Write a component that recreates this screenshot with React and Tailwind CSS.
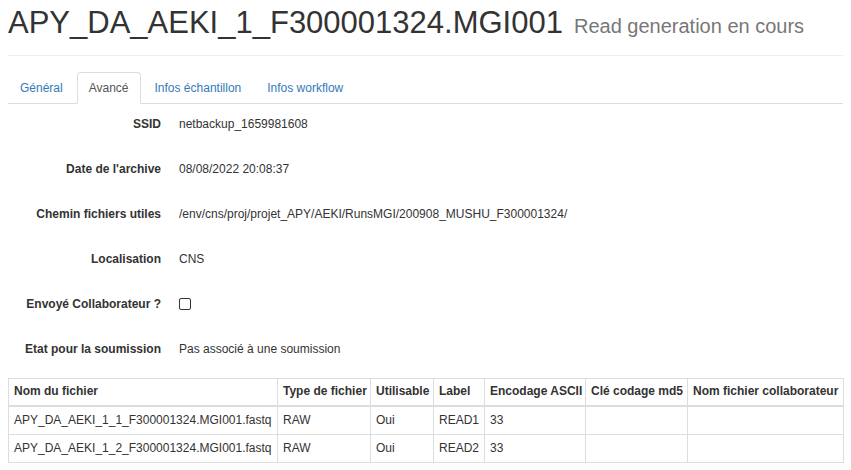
const rows = [
  { label: "SSID", value: "netbackup_1659981608" },
  { label: "Date de l'archive", value: "08/08/2022 20:08:37" },
  {
    label: "Chemin fichiers utiles",
    value: "/env/cns/proj/projet_APY/AEKI/RunsMGI/200908_MUSHU_F300001324/",
  },
  { label: "Localisation", value: "CNS" },
  { label: "Envoyé Collaborateur ?", checkbox: true },
  { label: "Etat pour la soumission", value: "Pas associé à une soumission" },
];

const cols = [
  { name: "Nom du fichier", w: "w-[269px]" },
  { name: "Type de fichier", w: "w-[93px]" },
  { name: "Utilisable", w: "w-[63px]" },
  { name: "Label", w: "w-[51px]" },
  { name: "Encodage ASCII", w: "w-[101px]" },
  { name: "Clé codage md5", w: "w-[102px]" },
  { name: "Nom fichier collaborateur", w: "w-[156px]" },
];

const files = [
  ["APY_DA_AEKI_1_1_F300001324.MGI001.fastq", "RAW", "Oui", "READ1", "33", "", ""],
  ["APY_DA_AEKI_1_2_F300001324.MGI001.fastq", "RAW", "Oui", "READ2", "33", "", ""],
];

const tabs = ["Général", "Avancé", "Infos échantillon", "Infos workflow"];

export default function App() {
  return (
    <div className="w-[851px] h-[470px] overflow-hidden bg-white px-2 font-['Liberation_Sans',Arial,sans-serif] text-[12px] text-[#333]">
      {/* header */}
      <div className="pt-[6px] pb-[14px] border-b border-[#eee] flex items-baseline">
        <h1 className="text-[31px] leading-[34px] text-[#333]">APY_DA_AEKI_1_F300001324.MGI001</h1>
        <span className="ml-[11px] text-[20px] text-[#777]">Read generation en cours</span>
      </div>

      {/* tabs */}
      <div className="mt-[16px] flex border-b border-[#ddd]">
        {tabs.map((t) => (
          <div
            key={t}
            className={
              t === "Avancé"
                ? "mr-[2px] -mb-px px-[11px] h-[32px] flex items-center border border-[#ddd] border-b-white rounded-t-[4px] bg-white text-[#555]"
                : "mr-[2px] px-[11px] h-[31px] flex items-center border border-transparent text-[#337ab7]"
            }
          >
            {t}
          </div>
        ))}
      </div>

      {/* details */}
      <div className="pt-[3px] flex flex-col gap-[11px]">
        {rows.map((r) => (
          <div key={r.label} className="h-[34px] flex items-center">
            <div className="w-[153px] text-right font-bold">{r.label}</div>
            <div className="ml-[18px]">
              {r.checkbox ? (
                <div className="w-[12px] h-[12px] border border-[#333] rounded-[2px] bg-white" />
              ) : (
                r.value
              )}
            </div>
          </div>
        ))}
      </div>

      {/* files table */}
      <table className="mt-[12px] w-[835px] table-fixed border-collapse">
        <thead>
          <tr>
            {cols.map((c) => (
              <th
                key={c.name}
                className={`${c.w} border border-[#ddd] border-b-2 px-[5px] pt-[4px] pb-[5px] leading-[17px] text-left font-bold whitespace-nowrap`}
              >
                {c.name}
              </th>
            ))}
          </tr>
        </thead>
        <tbody>
          {files.map((f, i) => (
            <tr key={i}>
              {f.map((v, j) => (
                <td key={j} className="border border-[#ddd] px-[5px] py-[5px] leading-[17px] whitespace-nowrap">
                  {v}
                </td>
              ))}
            </tr>
          ))}
        </tbody>
      </table>
    </div>
  );
}
